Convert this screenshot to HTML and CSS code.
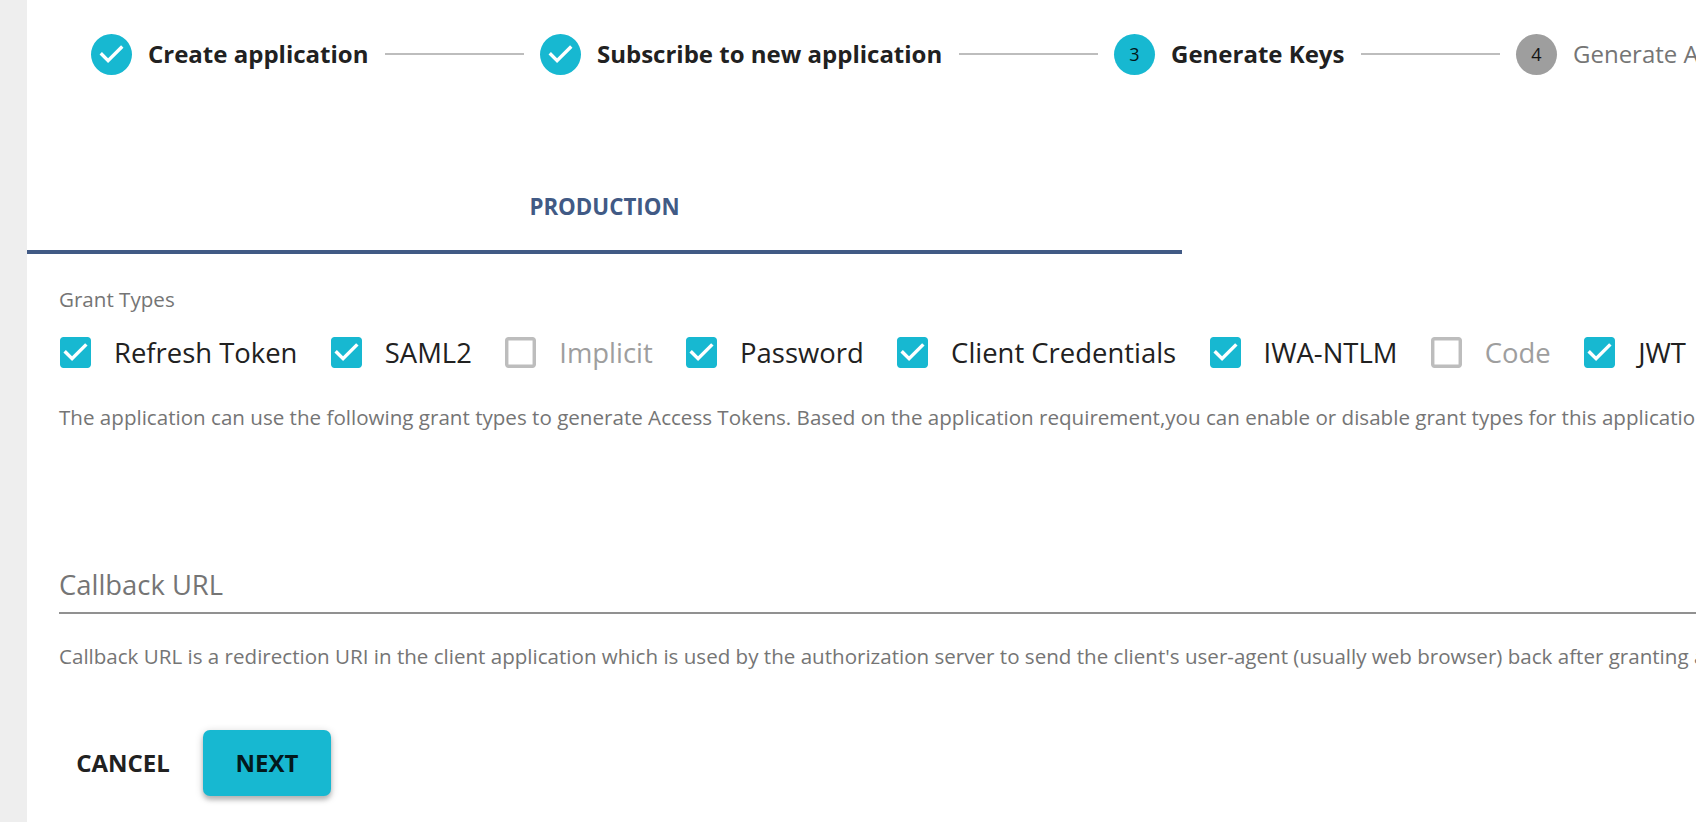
FILE: index.html
```html
<!DOCTYPE html>
<html lang="en">
<head>
<meta charset="utf-8">
<title>Generate Keys</title>
<link rel="stylesheet" href="styles.css">
</head>
<body>
<svg width="0" height="0" class="defs">
  <symbol id="done" viewBox="0 0 24 24"><path d="M12 0a12 12 0 1 0 0 24 12 12 0 0 0 0-24zm-2 17l-5-5 1.4-1.4 3.6 3.6 7.6-7.6L19 8l-9 9z"/></symbol>
  <symbol id="checked" viewBox="3 3 18 18"><path d="M19 3H5c-1.11 0-2 .9-2 2v14c0 1.1.89 2 2 2h14c1.11 0 2-.9 2-2V5c0-1.1-.89-2-2-2zm-9 14l-5-5 1.41-1.41L10 14.17l7.59-7.59L19 8l-9 9z"/></symbol>
  <symbol id="blank" viewBox="3 3 18 18"><path d="M19 5v14H5V5h14m0-2H5c-1.1 0-2 .9-2 2v14c0 1.1.9 2 2 2h14c1.1 0 2-.9 2-2V5c0-1.1-.9-2-2-2z"/></symbol>
</svg>
<main class="page">
  <ol class="stepper">
    <li class="step"><svg class="step-icon"><use href="#done"/></svg><span class="step-label w1">Create application</span></li>
    <li class="connector"></li>
    <li class="step"><svg class="step-icon"><use href="#done"/></svg><span class="step-label w2">Subscribe to new application</span></li>
    <li class="connector"></li>
    <li class="step"><span class="step-number">3</span><span class="step-label w3">Generate Keys</span></li>
    <li class="connector"></li>
    <li class="step"><span class="step-number pending">4</span><span class="step-label upcoming">Generate Access Token</span></li>
  </ol>
  <div class="tabs"><div class="tab">PRODUCTION</div></div>
  <section class="form">
    <div class="caption">Grant Types</div>
    <div class="grants">
      <label class="grant"><svg class="box"><use href="#checked"/></svg>Refresh Token</label>
      <label class="grant"><svg class="box"><use href="#checked"/></svg>SAML2</label>
      <label class="grant disabled"><svg class="box"><use href="#blank"/></svg>Implicit</label>
      <label class="grant"><svg class="box"><use href="#checked"/></svg>Password</label>
      <label class="grant"><svg class="box"><use href="#checked"/></svg>Client Credentials</label>
      <label class="grant"><svg class="box"><use href="#checked"/></svg>IWA-NTLM</label>
      <label class="grant disabled"><svg class="box"><use href="#blank"/></svg>Code</label>
      <label class="grant"><svg class="box"><use href="#checked"/></svg>JWT</label>
    </div>
    <p class="caption help">The application can use the following grant types to generate Access Tokens. Based on the application requirement,you can enable or disable grant types for this application.</p>
    <div class="field">Callback URL</div>
    <p class="caption url-help">Callback URL is a redirection URI in the client application which is used by the authorization server to send the client's user-agent (usually web browser) back after granting access.</p>
    <div class="actions">
      <button class="btn cancel">CANCEL</button>
      <button class="btn next">NEXT</button>
    </div>
  </section>
</main>
</body>
</html>
```
FILE: styles.css
```css
* { box-sizing: border-box; }
body {
  margin: 0;
  background: #eee;
  font-family: "Open Sans", sans-serif;
  color: #212121;
  overflow: hidden;
}
.defs { display: block; }
.page {
  margin-left: 27px;
  height: 822px;
  background: #fff;
  overflow: hidden;
  white-space: nowrap;
}
.stepper {
  display: flex;
  align-items: center;
  list-style: none;
  margin: 0;
  padding: 34px 0 0 64px;
}
.step { display: flex; flex: none; align-items: center; }
.step-icon { width: 41px; height: 41px; fill: #17b8d1; }
.step-number {
  width: 41px;
  height: 41px;
  border-radius: 50%;
  background: #17b8d1;
  font-size: 18px;
  line-height: 41px;
  text-align: center;
  color: #02171a;
}
.step-number.pending { background: #9e9e9e; color: #141414; }
.step-label {
  height: 41px;
  margin-left: 16px;
  font-size: 24px;
  line-height: 39px;
  font-weight: 700;
}
.w1 { width: 221px; }
.w2 { width: 346px; }
.w3 { width: 174px; }
.upcoming { font-weight: 400; color: #757575; }
.connector {
  flex: none;
  width: 139px;
  height: 2px;
  margin: 0 16px 1px;
  background: #bdbdbd;
}
.tabs { display: flex; margin-top: 91px; }
.tab {
  width: 1155px;
  height: 88px;
  border-bottom: 4px solid #415a85;
  color: #415a85;
  font-size: 22.3px;
  line-height: 82px;
  font-weight: 700;
  text-align: center;
}
.form { padding-left: 32px; }
.caption {
  margin: 0;
  font-size: 20.58px;
  line-height: 28px;
  color: #757575;
}
.form > .caption:first-child { padding-top: 31px; }
.grants { display: flex; gap: 33.4px; margin-top: 17px; padding-left: 1px; }
.grant {
  display: flex;
  align-items: center;
  height: 44px;
  font-size: 27.43px;
}
.box { width: 31px; height: 31px; margin-right: 23px; fill: #17b8d1; }
.disabled { color: #9e9e9e; }
.disabled .box { fill: #bdbdbd; }
.help { margin-top: 29px; }
.field {
  margin-top: 133px;
  height: 50px;
  border-bottom: 2px solid #919191;
  font-size: 27.4px;
  line-height: 42px;
  color: #757575;
}
.url-help { margin-top: 28px; font-size: 20.57px; }
.actions { display: flex; gap: 16px; margin-top: 60px; }
.btn {
  height: 66px;
  padding: 0;
  border: 0;
  border-radius: 7px;
  background: none;
  font: 700 24px/66px "Open Sans", sans-serif;
  color: #212121;
}
.cancel { width: 128px; }
.next {
  width: 128px;
  background: #17b8d1;
  color: #03191c;
  box-shadow: 0 2px 8px rgba(0, 0, 0, .2), 0 4px 4px rgba(0, 0, 0, .18);
}
```
